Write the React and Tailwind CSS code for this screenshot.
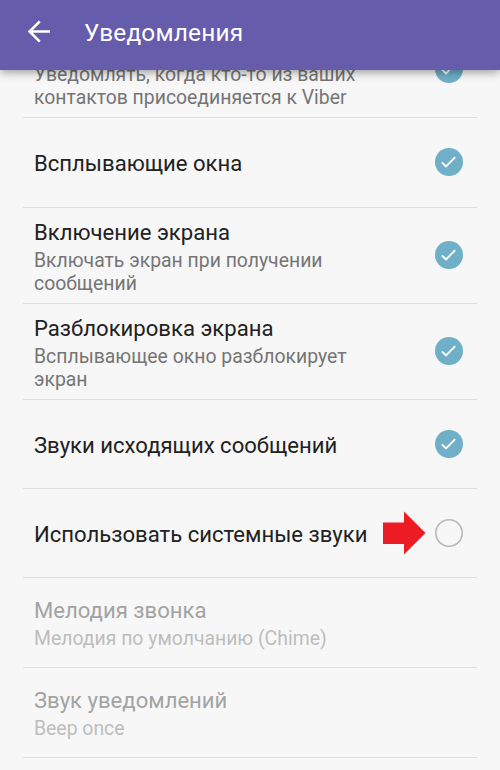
import clsx from 'clsx'

const settings = [
  {
    id: 'contact-joined',
    lines: ['Уведомлять, когда кто-то из ваших', 'контактов присоединяется к Viber'],
    checked: true,
    height: 'h-24',
  },
  { id: 'popups', title: 'Всплывающие окна', checked: true, height: 'h-[90px]' },
  {
    id: 'screen-on',
    title: 'Включение экрана',
    lines: ['Включать экран при получении', 'сообщений'],
    checked: true,
    height: 'h-24',
  },
  {
    id: 'unlock',
    title: 'Разблокировка экрана',
    lines: ['Всплывающее окно разблокирует', 'экран'],
    checked: true,
    height: 'h-24',
  },
  { id: 'outgoing', title: 'Звуки исходящих сообщений', checked: true, height: 'h-[89px]' },
  {
    id: 'system-sounds',
    title: 'Использовать системные звуки',
    checked: false,
    pointer: true,
    height: 'h-[89px]',
  },
  {
    id: 'ringtone',
    title: 'Мелодия звонка',
    lines: ['Мелодия по умолчанию (Chime)'],
    disabled: true,
    height: 'h-[90px]',
  },
  {
    id: 'sound',
    title: 'Звук уведомлений',
    lines: ['Beep once'],
    disabled: true,
    height: 'h-[90px]',
  },
]

function CheckCircle({ checked }) {
  if (!checked) {
    return (
      <svg className="block size-7" viewBox="0 0 28 28" fill="none">
        <circle cx="14" cy="14" r="13.2" stroke="#b9b9b9" strokeWidth="1.6" />
      </svg>
    )
  }
  return (
    <svg className="mb-px block size-7" viewBox="0 0 28 28" fill="none">
      <circle cx="14" cy="14" r="14" fill="#6fafc7" />
      <path d="M6.8 14.4l4.2 4 9.2-9.3" stroke="#fff" strokeWidth="1.9" />
    </svg>
  )
}

function PointerArrow() {
  return (
    <svg className="block h-[44px] w-[43px]" viewBox="0 0 43 44">
      <path d="M0 11.5h21V0.5l21.5 21.5L21 43.5V33H0z" fill="#ec1c24" />
    </svg>
  )
}

function SettingRow({ item }) {
  return (
    <li className={clsx('flex items-center justify-between border-b border-[#dedede] pl-[11px] pr-[14px]', item.height)}>
      <div className={clsx('whitespace-nowrap', item.title ? 'pt-px' : 'pt-8')}>
        {item.title && (
          <p
            className={clsx(
              'text-[22.1px] leading-7',
              item.lines && 'mb-[3px]',
              item.disabled ? 'text-[#a3a3a3]' : 'text-[#212121]'
            )}
          >
            {item.title}
          </p>
        )}
        {item.lines?.map((line) => (
          <p
            key={line}
            className={clsx(
              'text-[19.4px] leading-[23px]',
              item.disabled ? 'text-[#bdbdbd]' : 'text-[#757575]'
            )}
          >
            {line}
          </p>
        ))}
      </div>
      {!item.disabled && (
        <div className="flex items-center gap-[9px]">
          {item.pointer && <PointerArrow />}
          <CheckCircle checked={item.checked} />
        </div>
      )}
    </li>
  )
}

export default function App() {
  return (
    <div className="flex h-[770px] w-[500px] flex-col overflow-hidden bg-[#f7f7f7] font-['Roboto',sans-serif]">
      <header className="z-10 flex h-[70px] shrink-0 items-center bg-[#665cac] pb-[6px] pl-[27px] text-white shadow-[0_2px_9px_rgba(0,0,0,0.4)]">
        <svg className="size-6" viewBox="0 0 24 24" fill="none" stroke="#fff" strokeWidth="2.6">
          <path d="M23 11.5H3M12.8 1.4L2.6 11.5l10.2 10.1" />
        </svg>
        <h1 className="ml-[33px] pt-px text-[24.4px] leading-7 tracking-[0.2px]">Уведомления</h1>
      </header>
      {/* list is scrolled, the first row sits half under the header */}
      <ul className="-mt-12 px-[23px]">
        {settings.map((item) => (
          <SettingRow key={item.id} item={item} />
        ))}
      </ul>
    </div>
  )
}
